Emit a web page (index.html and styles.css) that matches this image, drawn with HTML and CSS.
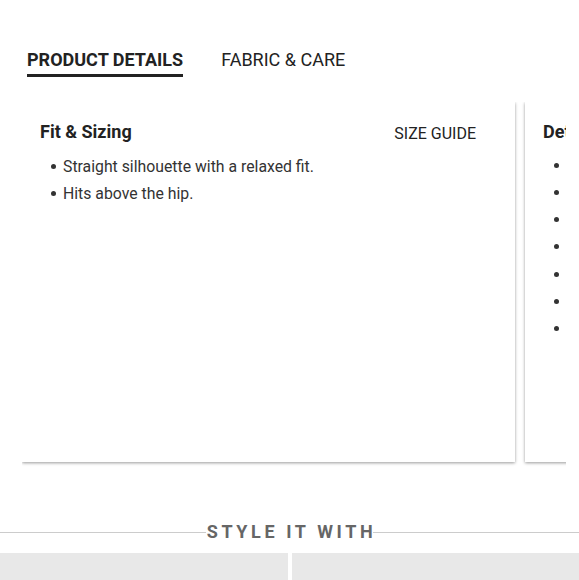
FILE: index.html
```html
<!DOCTYPE html>
<html>
<head>
<meta charset="utf-8">
<link rel="stylesheet" href="styles.css">
</head>
<body>
<div class="page">
  <div class="tabs">
    <div class="tab active">PRODUCT DETAILS</div>
    <div class="tab">FABRIC &amp; CARE</div>
  </div>
  <div class="cards">
    <div class="card">
      <div class="card-head">
        <div class="card-title">Fit &amp; Sizing</div>
        <div class="size-guide">SIZE GUIDE</div>
      </div>
      <ul class="list">
        <li>Straight silhouette with a relaxed fit.</li>
        <li>Hits above the hip.</li>
      </ul>
    </div>
    <div class="card">
      <div class="card-head">
        <div class="card-title">Details</div>
      </div>
      <ul class="list">
        <li>Crew neckline.</li>
        <li>Long sleeves.</li>
        <li>Ribbed trim.</li>
        <li>Pullover style.</li>
        <li>Soft knit.</li>
        <li>Imported.</li>
        <li>Machine wash.</li>
      </ul>
    </div>
  </div>
  <div class="style-with">
    <span class="rule"></span>
    <span class="style-title">STYLE IT WITH</span>
    <span class="rule"></span>
  </div>
  <div class="tiles">
    <div class="tile"></div>
    <div class="tile"></div>
  </div>
</div>
</body>
</html>
```
FILE: styles.css
```css
* { box-sizing: border-box; }
html, body { margin: 0; padding: 0; background: #fff; }
body { font-family: Roboto, "Liberation Sans", sans-serif; color: #222; overflow: hidden; }
.page { width: 579px; height: 580px; overflow: hidden; }
.tabs { display: flex; gap: 38px; padding: 48px 0 0 27px; }
.tab { font-size: 18px; line-height: 24px; color: #222; padding-bottom: 2px; }
.tab.active { font-weight: 700; border-bottom: 3px solid #222; }
.cards { display: flex; gap: 10px; margin: 25px 13px 0 22px; padding-bottom: 8px; overflow: hidden; }
.card { flex: 0 0 493px; height: 360px; background: #fff; box-shadow: 0 1px 3px rgba(0,0,0,0.4); padding: 18px 18px; }
.card-head { display: flex; justify-content: space-between; align-items: baseline; }
.card-title { font-size: 18px; font-weight: 700; line-height: 24px; }
.size-guide { font-size: 16px; line-height: 24px; margin-right: 21px; position: relative; top: 1px; }
.list { list-style: none; margin: 8px 0 0; padding-left: 23px; font-size: 15.8px; line-height: 27.2px; color: #333; }
.list li::before { content: ""; display: inline-block; width: 5px; height: 5px; border-radius: 50%; background: #333; vertical-align: middle; margin: 0 7px 3px -12px; }
.style-with { display: flex; align-items: center; margin-top: 50px; }
.rule { flex: 1; height: 1px; background: #ccc; }
.style-title { font-size: 18px; font-weight: 700; letter-spacing: 3.6px; color: #666; padding: 0 0 0 1px; line-height: 24px; margin-right: -3px; }
.tiles { display: flex; gap: 4px; margin-top: 9px; }
.tile { flex: 0 0 288px; height: 40px; background: #e8e8e8; }
```
